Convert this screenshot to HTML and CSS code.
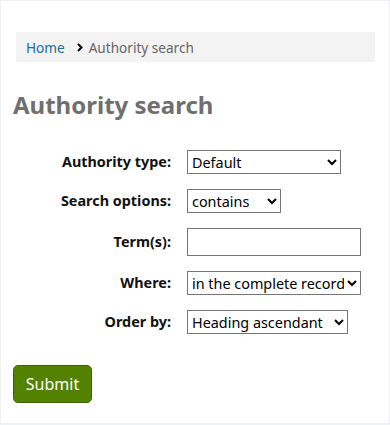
FILE: index.html
```html
<!DOCTYPE html>
<html lang="en">
<head>
  <meta charset="UTF-8" />
  <title>Authority search</title>
  <link rel="stylesheet" href="styles.css">
</head>
<body>
  <div class="main">
    <nav class="breadcrumb">
      <a href="#">Home</a>
      <span class="sep">
        <svg width="6" height="9" viewBox="0 0 6 9"><path d="M1 1l3.5 3.5L1 8" fill="none" stroke="#000" stroke-width="2"/></svg>
      </span>
      <span class="current">Authority search</span>
    </nav>

    <h1>Authority search</h1>

    <form class="search-form">
      <label for="authtype">Authority type:</label>
      <select id="authtype" class="w-type">
        <option>Default</option>
      </select>

      <label for="op">Search options:</label>
      <select id="op" class="w-op">
        <option>contains</option>
      </select>

      <label for="value">Term(s):</label>
      <input type="text" id="value" class="term" />

      <label for="where">Where:</label>
      <select id="where" class="w-where">
        <option>in the complete record</option>
      </select>

      <label for="order">Order by:</label>
      <select id="order" class="w-order">
        <option>Heading ascendant</option>
      </select>

      <div class="actions">
        <button type="submit">Submit</button>
      </div>
    </form>
  </div>
</body>
</html>
```

FILE: styles.css
```css
* { box-sizing: border-box; }

body {
  margin: 0;
  padding: 1px;
  background: #eef1f1;
  font-family: "Noto Sans", "Open Sans", sans-serif;
  color: #111;
}

.main {
  background: #fff;
  height: 422px;
  padding: 31px 12px 0 12px;
}

.breadcrumb {
  margin: 0 2px 0 3px;
  background: #f3f3f3;
  height: 30px;
  padding: 0 10px;
  display: flex;
  align-items: center;
  font-size: 13.6px;
}

.breadcrumb a {
  color: #1a6c9c;
  text-decoration: none;
}

.breadcrumb .sep {
  display: inline-flex;
  margin: 0 6px 0 12px;
}

.breadcrumb .current {
  color: #666;
}

h1 {
  font-size: 24px;
  font-weight: bold;
  color: #6f6f6f;
  margin: 27px 0 29px 0;
  line-height: 32px;
}

.search-form {
  display: grid;
  grid-template-columns: 158px auto;
  column-gap: 16px;
  row-gap: 15px;
  align-items: center;
  justify-items: start;
}

.search-form label {
  justify-self: end;
  font-weight: bold;
  font-size: 14.4px;
  color: #111;
  margin-top: -2px;
}

.search-form select,
.search-form input {
  font-family: "Noto Sans", "Open Sans", sans-serif;
  font-size: 14.4px;
  height: 24px;
  border: 1px solid #767676;
  border-radius: 0;
  background: #fff;
  color: #000;
}

.w-type { width: 154px; }
.w-op { width: 94px; }
.w-where { width: 174px; }
.w-order { width: 161px; }

.search-form input.term {
  width: 174px;
  height: 28px;
}

.actions {
  grid-column: 1 / -1;
  margin-top: 16px;
}

.actions button {
  font-family: "Noto Sans", "Open Sans", sans-serif;
  font-size: 16px;
  color: #fff;
  background: #538200;
  border: 1px solid #3f6400;
  border-radius: 5px;
  width: 79px;
  height: 38px;
  padding: 0;
  cursor: pointer;
}
```
